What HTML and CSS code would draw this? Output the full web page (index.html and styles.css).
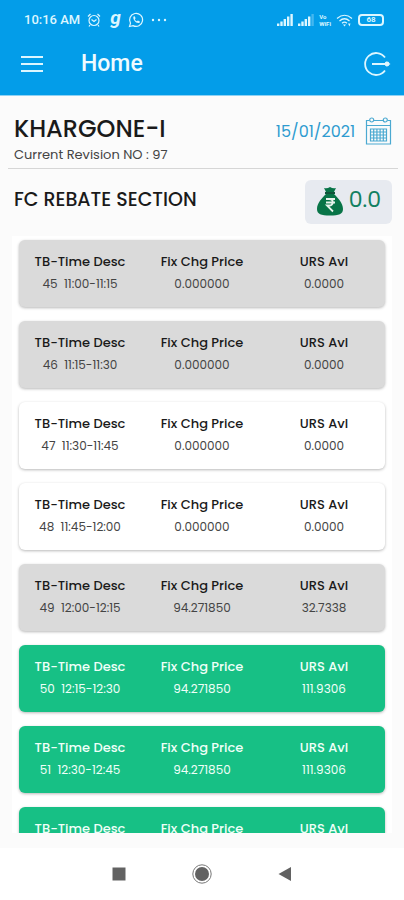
FILE: index.html
```html
<!DOCTYPE html>
<html lang="en">
<head>
<meta charset="utf-8">
<meta name="viewport" content="width=device-width, initial-scale=1">
<title>Home</title>
<link rel="stylesheet" href="styles.css">
</head>
<body>
<header class="top">
  <div class="status">
    <span class="clock">10:16 AM</span>
    <svg class="stat-icon" width="14" height="14" viewBox="0 0 14 14"><circle cx="7" cy="7.5" r="5"/><path d="M1 3.5 3.5 1M13 3.5 10.5 1M3 12l-1 1.500M11 12l1 1.500M4.500 6.500 7 8.500l2.500-2"/></svg>
    <span class="g-mark">g</span>
    <svg class="stat-icon wa" width="16" height="16" viewBox="0 0 16 16"><path d="M1.500 14.500l1-3.300A6.500 6.500 0 1 1 5 13.600z"/><path class="solid" d="M5.500 4.500l1.200-.3.900 2-.8 1c.5 1 1.100 1.600 2.200 2.100l.9-.9 2 1-.3 1.300c-2.700 1.500-7.300-2.800-6.100-6.200z"/></svg>
    <svg class="stat-icon" width="16" height="4" viewBox="0 0 16 4"><g class="solid"><circle cx="2" cy="2" r="1.200"/><circle cx="8" cy="2" r="1.200"/><circle cx="14" cy="2" r="1.200"/></g></svg>
    <div class="status-right">
      <svg width="16" height="12" viewBox="0 0 16 12"><path class="solid" d="M0 9.500h2.400V12H0zM3.300 7.500h2.400V12H3.300zM6.600 5H9v7H6.600zM10 2.500h2.400V12H10zM13.400 0h2.400v12h-2.400z"/></svg>
      <svg width="16" height="12" viewBox="0 0 16 12"><path class="solid" d="M0 9.500h2.400V12H0zM3.300 7.500h2.400V12H3.300zM6.600 5H9v7H6.600zM10 2.500h2.400V12H10z"/><path class="faint" d="M13.400 0h2.400v12h-2.400z"/></svg>
      <span class="vo">Vo<br>WiFi</span>
      <svg class="stat-icon" width="17" height="13" viewBox="0 0 17 13"><path d="M1 4.500Q8.500-2 16 4.500M3.500 7Q8.500 2.500 13.500 7M6 9.300Q8.500 7 11 9.300"/><path class="solid" d="M7 10.500h3L8.500 12.500zM12 9.500l1.500 3 1-3z"/></svg>
      <span class="battery">68</span>
    </div>
  </div>
  <div class="appbar">
    <button class="icon-btn" aria-label="Menu"><svg width="22" height="16" viewBox="0 0 22 16"><path class="solid" d="M0 0h22v2H0zM0 7h22v2H0zM0 14h22v2H0z"/></svg></button>
    <h1 class="title">Home</h1>
    <button class="icon-btn" aria-label="Log out"><svg width="27" height="24" viewBox="0 0 27 24"><path class="ring" d="M21 5.500A11 11 0 1 0 21 18.500M8 12h15"/><circle class="solid" cx="23" cy="12" r="2.400"/><path class="solid" d="M22.500 9.500 26.500 12 22.500 14.500z"/></svg></button>
  </div>
</header>
<main class="content">
  <section class="station">
    <div>
      <h2 class="name">KHARGONE-I</h2>
      <p class="revision">Current Revision NO : 97</p>
    </div>
    <button class="date">15/01/2021
      <svg width="27" height="28" viewBox="0 0 26 28"><path d="M4 3.500H1V27h24V3.500h-3M8.500 3.500h9M1 8.500h24"/><circle cx="6.200" cy="3" r="2"/><circle cx="19.800" cy="3" r="2"/><path d="M5 12h16v12H5zM5 15h16M5 18h16M5 21h16M8.200 12v12M11.400 12v12M14.600 12v12M17.800 12v12"/></svg>
    </button>
  </section>
  <section class="rebate">
    <h2 class="section-title">FC REBATE SECTION</h2>
    <div class="amount">
      <svg width="26" height="30" viewBox="0 0 26 30"><path class="bag" d="M7 2q3 1 6-1 3 2 6 1l-2 4H9zM9 8h8c4 4 9 9 9 15 0 5-4 6.500-13 6.500S0 28 0 23C0 17 5 12 9 8z"/><path class="tie" d="M8 6h10v2H8z"/><path class="rupee" d="M9 13h9M9 16.500h9M9 13h3c5 0 5 6.500 0 6.500H10l6 6"/></svg>
      <span>0.0</span>
    </div>
  </section>
  <div class="list">
    <dl class="card past"><div><dt>TB-Time Desc</dt><dd>45&nbsp; 11:00-11:15</dd></div><div><dt>Fix Chg Price</dt><dd>0.000000</dd></div><div><dt>URS Avl</dt><dd>0.0000</dd></div></dl>
    <dl class="card past"><div><dt>TB-Time Desc</dt><dd>46&nbsp; 11:15-11:30</dd></div><div><dt>Fix Chg Price</dt><dd>0.000000</dd></div><div><dt>URS Avl</dt><dd>0.0000</dd></div></dl>
    <dl class="card"><div><dt>TB-Time Desc</dt><dd>47&nbsp; 11:30-11:45</dd></div><div><dt>Fix Chg Price</dt><dd>0.000000</dd></div><div><dt>URS Avl</dt><dd>0.0000</dd></div></dl>
    <dl class="card"><div><dt>TB-Time Desc</dt><dd>48&nbsp; 11:45-12:00</dd></div><div><dt>Fix Chg Price</dt><dd>0.000000</dd></div><div><dt>URS Avl</dt><dd>0.0000</dd></div></dl>
    <dl class="card past"><div><dt>TB-Time Desc</dt><dd>49&nbsp; 12:00-12:15</dd></div><div><dt>Fix Chg Price</dt><dd>94.271850</dd></div><div><dt>URS Avl</dt><dd>32.7338</dd></div></dl>
    <dl class="card open"><div><dt>TB-Time Desc</dt><dd>50&nbsp; 12:15-12:30</dd></div><div><dt>Fix Chg Price</dt><dd>94.271850</dd></div><div><dt>URS Avl</dt><dd>111.9306</dd></div></dl>
    <dl class="card open"><div><dt>TB-Time Desc</dt><dd>51&nbsp; 12:30-12:45</dd></div><div><dt>Fix Chg Price</dt><dd>94.271850</dd></div><div><dt>URS Avl</dt><dd>111.9306</dd></div></dl>
    <dl class="card open"><div><dt>TB-Time Desc</dt></div><div><dt>Fix Chg Price</dt></div><div><dt>URS Avl</dt></div></dl>
  </div>
</main>
<nav class="sysnav">
  <button class="icon-btn" aria-label="Recent apps"><svg width="20" height="20" viewBox="0 0 20 20"><path d="M3.500 3.500h13v13h-13z"/></svg></button>
  <button class="icon-btn" aria-label="Home screen"><svg width="20" height="20" viewBox="0 0 20 20"><circle cx="10" cy="10" r="7"/><circle class="outline" cx="10" cy="10" r="9.200"/></svg></button>
  <button class="icon-btn" aria-label="Back"><svg width="20" height="20" viewBox="0 0 20 20"><path d="M16 3v14L3.500 10z"/></svg></button>
</nav>
</body>
</html>
```
FILE: styles.css
```css
* { box-sizing: border-box; margin: 0; }
body {
  display: flex;
  flex-direction: column;
  height: 100vh;
  background: #fbfbfb;
  color: #1a1a1a;
  font-family: Poppins, Inter, sans-serif;
}
button { border: 0; padding: 0; background: none; font: inherit; color: inherit; }
svg { display: block; flex: none; }

.top { background: #039de9; color: #dcf6ff; border-bottom: 1px solid #8fd2f4; }
.top .solid { fill: currentColor; stroke: none; }
.status { display: flex; align-items: center; gap: 7px; padding: 10px 20px 0 24px; height: 30px; }
.clock { font: 500 13px/20px Roboto, sans-serif; }
.stat-icon { fill: none; stroke: currentColor; stroke-width: 1.2; }
.g-mark { width: 11px; font: italic 700 19px/18px Roboto, sans-serif; margin: -4px 0 0 2px; }
.status-right { display: flex; align-items: center; gap: 5px; margin-left: auto; }
.faint { fill: currentColor; opacity: 0.3; }
.vo { font: 700 6px/7px Roboto, sans-serif; }
.battery {
  width: 26px;
  border: 2px solid currentColor;
  border-radius: 4px;
  font: 700 8px/8px Roboto, sans-serif;
  text-align: center;
}
.appbar { display: flex; align-items: center; padding: 3px 13px 0 21px; height: 65px; }
.title { flex: 1; margin-left: 38px; font: 500 23px/28px Roboto, sans-serif; color: #effbff; }
.icon-btn { display: block; }
.ring { fill: none; stroke: currentColor; stroke-width: 1.8; }

.content { flex: 1; min-height: 0; display: flex; flex-direction: column; margin-bottom: 15px; }
.station {
  display: flex;
  justify-content: space-between;
  margin: 0 6px 0 8px;
  padding: 17px 6px 4px;
  border-bottom: 1px solid #d6d6d6;
}
.name { font-size: 24px; line-height: 32px; font-weight: 500; }
.revision { font-size: 13px; line-height: 19px; color: #444; }
.date { display: flex; align-items: center; gap: 10px; height: 36px; font-size: 16px; color: #2e9bd0; }
.date svg { fill: none; stroke: #4ba9d1; stroke-width: 1.2; }
.rebate { display: flex; justify-content: space-between; align-items: center; padding: 11px 12px 12px 14px; }
.section-title { padding-bottom: 4px; font-size: 19px; line-height: 24px; font-weight: 500; }
.amount {
  display: flex;
  align-items: center;
  gap: 6px;
  height: 44px;
  padding: 0 11px 2px 12px;
  border-radius: 6px;
  background: #e7eaf0;
  color: #128061;
  font-size: 22px;
}
.amount span { padding-bottom: 3px; }
.bag { fill: #087447; }
.tie { fill: #10543a; }
.rupee { fill: none; stroke: #e8f4ec; stroke-width: 1.8; }

.list {
  flex: 1;
  min-height: 0;
  overflow-y: auto;
  scrollbar-width: none;
  margin: 0 12px;
  padding: 4px 7px 0;
  background: #fff;
}
.card {
  display: grid;
  grid-template-columns: repeat(3, 1fr);
  height: 67px;
  margin-bottom: 14px;
  padding-top: 11px;
  border-radius: 6px;
  background: #fff;
  box-shadow: 0 1px 3px rgba(0, 0, 0, 0.28);
  text-align: center;
}
.card.past { background: #dadada; }
.card.open { background: #17c085; color: #effff8; }
dt { font-size: 13px; line-height: 22px; font-weight: 500; }
dd { font-size: 12px; line-height: 22px; color: #444; }
.open dd { color: #effff8; }

.sysnav { display: flex; justify-content: center; gap: 63px; padding: 16px 0; background: #fff; fill: #626262; }
.outline { fill: none; stroke: #777; stroke-width: 1; }
```
